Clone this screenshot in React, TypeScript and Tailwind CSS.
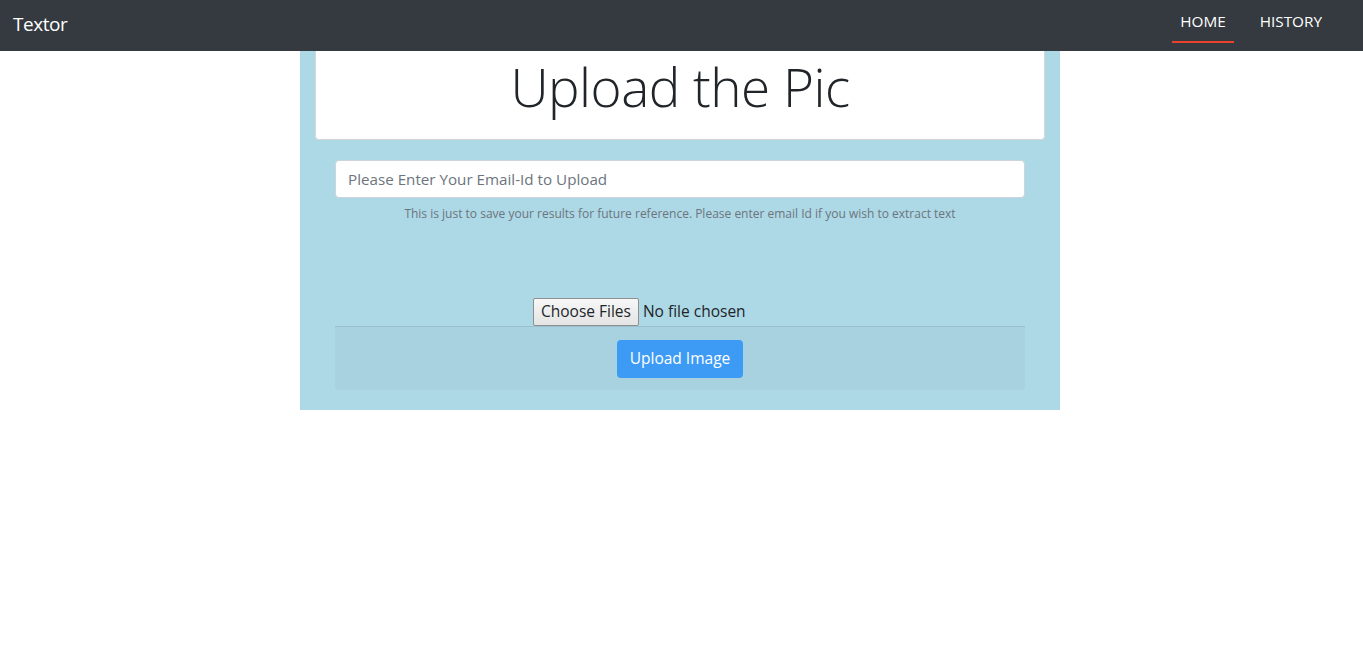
export default function App() {
  return (
    <div className="min-h-[651px] bg-white" style={{ fontFamily: '"Open Sans", "Noto Sans", sans-serif' }}>
      {/* Navbar */}
      <nav className="h-[51px] bg-[#343a40] flex items-center justify-between pl-[13px] pr-[33px]">
        <span className="text-[19px] text-white tracking-tight pb-[2px]">Textor</span>
        <div className="flex items-stretch h-full">
          <a className="relative flex items-center px-[8px] pb-[8px] text-[15.3px] text-white mr-[18px]">
            HOME
            <span className="absolute left-0 right-0 bottom-[8px] h-[2px] bg-[#e8412c]" />
          </a>
          <a className="flex items-center px-[8px] pb-[8px] text-[15.3px] text-white">HISTORY</a>
        </div>
      </nav>

      {/* Panel */}
      <div className="ml-[300px] w-[760px] bg-[#add8e6] px-[15px] pb-[20px]">
        <div className="bg-white rounded-b-[4px] border border-t-0 border-[#d6d6d6] h-[89px] flex items-center justify-center">
          <h1 className="text-[53px] font-light text-[#212529] leading-none pb-[18px] tracking-[-0.5px]">Upload the Pic</h1>
        </div>

        <div className="px-[20px] pt-[20px]">
          <input
            type="text"
            placeholder="Please Enter Your Email-Id to Upload"
            className="w-full h-[38px] rounded-[4px] bg-white border border-[#ced4da] px-3 text-[15.2px] text-[#495057] placeholder:text-[#6c757d] outline-none"
          />
          <p className="text-center text-[12px] text-[#6c757d] mt-[7px]">
            This is just to save your results for future reference. Please enter email Id if you wish to extract text
          </p>

          <div className="mt-[75px] flex pl-[198px]">
            <input
              type="file"
              multiple
              className="text-[15.5px] text-[#212529] w-[240px] h-[28px] file:h-[28px] file:mr-[4px] file:px-[7px] file:border file:border-[#8f8f8f] file:rounded-[2px] file:bg-gradient-to-b file:from-[#f7f7f7] file:to-[#e4e4e4] file:text-[#212529] file:text-[15.5px]"
            />
          </div>

          <div className="bg-[#a8d2df] border-t border-[#97bfcc] rounded-b-[4px] h-[64px] flex items-center justify-center">
            <button className="bg-[#3d9bf5] text-white text-[15.5px] rounded-[4px] h-[38px] px-[13px]">Upload Image</button>
          </div>
        </div>
      </div>
    </div>
  )
}
